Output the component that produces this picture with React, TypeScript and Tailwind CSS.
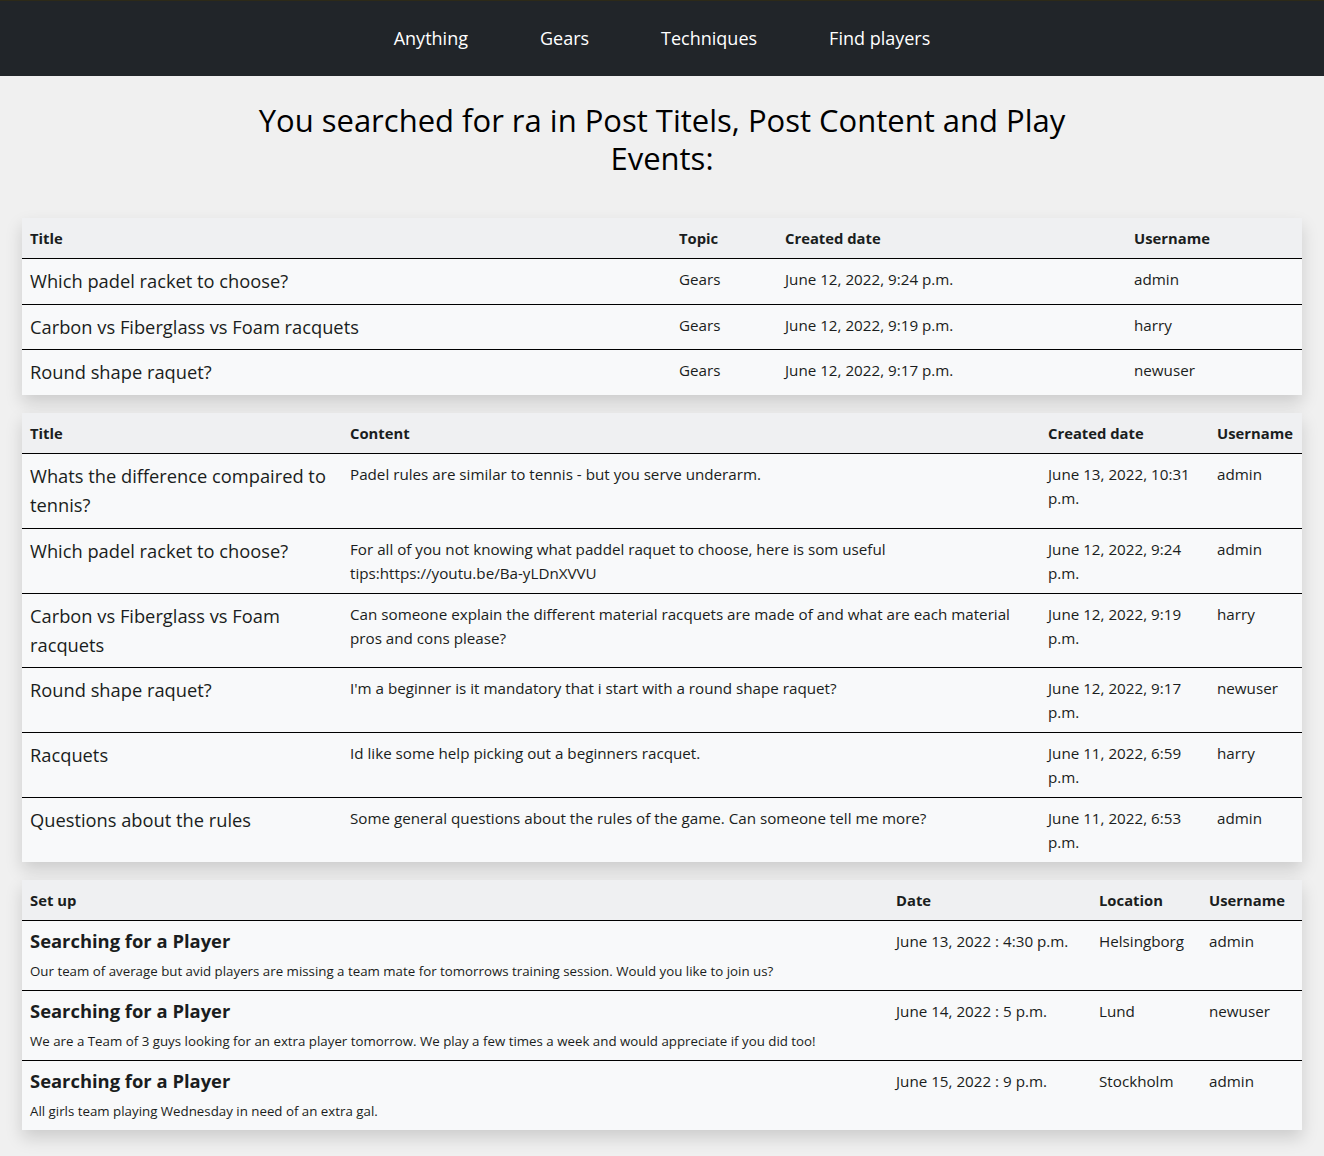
import React from "react";

const posts = [
  { title: "Which padel racket to choose?", topic: "Gears", date: "June 12, 2022, 9:24 p.m.", user: "admin" },
  { title: "Carbon vs Fiberglass vs Foam racquets", topic: "Gears", date: "June 12, 2022, 9:19 p.m.", user: "harry" },
  { title: "Round shape raquet?", topic: "Gears", date: "June 12, 2022, 9:17 p.m.", user: "newuser" },
];

const contents = [
  { title: "Whats the difference compaired to tennis?", content: "Padel rules are similar to tennis - but you serve underarm.", date: "June 13, 2022, 10:31 p.m.", user: "admin" },
  { title: "Which padel racket to choose?", content: "For all of you not knowing what paddel raquet to choose, here is som useful tips:https://youtu.be/Ba-yLDnXVVU", date: "June 12, 2022, 9:24 p.m.", user: "admin" },
  { title: "Carbon vs Fiberglass vs Foam racquets", content: "Can someone explain the different material racquets are made of and what are each material pros and cons please?", date: "June 12, 2022, 9:19 p.m.", user: "harry" },
  { title: "Round shape raquet?", content: "I'm a beginner is it mandatory that i start with a round shape raquet?", date: "June 12, 2022, 9:17 p.m.", user: "newuser" },
  { title: "Racquets", content: "Id like some help picking out a beginners racquet.", date: "June 11, 2022, 6:59 p.m.", user: "harry" },
  { title: "Questions about the rules", content: "Some general questions about the rules of the game. Can someone tell me more?", date: "June 11, 2022, 6:53 p.m.", user: "admin" },
];

const events = [
  { title: "Searching for a Player", text: "Our team of average but avid players are missing a team mate for tomorrows training session. Would you like to join us?", date: "June 13, 2022 : 4:30 p.m.", location: "Helsingborg", user: "admin" },
  { title: "Searching for a Player", text: "We are a Team of 3 guys looking for an extra player tomorrow. We play a few times a week and would appreciate if you did too!", date: "June 14, 2022 : 5 p.m.", location: "Lund", user: "newuser" },
  { title: "Searching for a Player", text: "All girls team playing Wednesday in need of an extra gal.", date: "June 15, 2022 : 9 p.m.", location: "Stockholm", user: "admin" },
];

const th = "px-2 py-2 text-left font-bold text-[14.8px] leading-6 align-top";
const td = "px-2 py-2 text-[15.2px] leading-6 align-top";
const titleTd = "px-2 py-2 text-[18.3px] leading-[28.8px] align-top";

export default function App() {
  return (
    <div className="min-h-screen bg-[#f0f0f0] text-[#1a1d20] font-['Open_Sans',sans-serif] pb-6">
      {/* navbar */}
      <nav className="h-[76px] bg-[#212529] border-t border-[#2d2a18] flex items-center justify-center">
        <ul className="flex items-center">
          {["Anything", "Gears", "Techniques", "Find players"].map((l) => (
            <li key={l}>
              <a href="#" className="block px-9 text-[18px] text-white">{l}</a>
            </li>
          ))}
        </ul>
      </nav>

      <h2 className="mx-auto mt-[25px] max-w-[840px] text-center text-[31px] font-medium leading-[38.4px] text-black">
        You searched for ra in Post Titels, Post Content and Play Events:
      </h2>

      <div className="mt-[40px] px-[22px] flex flex-col gap-[18px]">
        {/* posts by title */}
        <div className="shadow-[0_8px_16px_rgba(0,0,0,0.15)]">
          <table className="w-full table-fixed border-collapse">
            <colgroup>
              <col className="w-[649px]" />
              <col className="w-[106px]" />
              <col className="w-[349px]" />
              <col />
            </colgroup>
            <thead className="bg-[#eff0f2]">
              <tr className="border-b border-black">
                <th className={th}>Title</th>
                <th className={th}>Topic</th>
                <th className={th}>Created date</th>
                <th className={th}>Username</th>
              </tr>
            </thead>
            <tbody className="bg-[#f8f9fa]">
              {posts.map((p, i) => (
                <tr key={i} className={i < posts.length - 1 ? "border-b border-black" : ""}>
                  <td className={titleTd}>{p.title}</td>
                  <td className={td}>{p.topic}</td>
                  <td className={td}>{p.date}</td>
                  <td className={td}>{p.user}</td>
                </tr>
              ))}
            </tbody>
          </table>
        </div>

        {/* posts by content */}
        <div className="shadow-[0_8px_16px_rgba(0,0,0,0.15)]">
          <table className="w-full table-fixed border-collapse">
            <colgroup>
              <col className="w-[320px]" />
              <col className="w-[698px]" />
              <col className="w-[169px]" />
              <col />
            </colgroup>
            <thead className="bg-[#eff0f2]">
              <tr className="border-b border-black">
                <th className={th}>Title</th>
                <th className={th}>Content</th>
                <th className={th}>Created date</th>
                <th className={th}>Username</th>
              </tr>
            </thead>
            <tbody className="bg-[#f8f9fa]">
              {contents.map((p, i) => (
                <tr key={i} className={i < contents.length - 1 ? "border-b border-black" : ""}>
                  <td className={titleTd}>{p.title}</td>
                  <td className={td}>{p.content}</td>
                  <td className={td}>{p.date}</td>
                  <td className={td}>{p.user}</td>
                </tr>
              ))}
            </tbody>
          </table>
        </div>

        {/* play events */}
        <div className="shadow-[0_8px_16px_rgba(0,0,0,0.15)]">
          <table className="w-full table-fixed border-collapse">
            <colgroup>
              <col className="w-[866px]" />
              <col className="w-[203px]" />
              <col className="w-[110px]" />
              <col />
            </colgroup>
            <thead className="bg-[#eff0f2]">
              <tr className="border-b border-black">
                <th className={th}>Set up</th>
                <th className={th}>Date</th>
                <th className={th}>Location</th>
                <th className={th}>Username</th>
              </tr>
            </thead>
            <tbody className="bg-[#f8f9fa]">
              {events.map((e, i) => (
                <tr key={i} className={i < events.length - 1 ? "border-b border-black" : ""}>
                  <td className="px-2 py-2 align-top">
                    <h5 className="mb-2 text-[18.4px] font-bold leading-6">{e.title}</h5>
                    <small className="block text-[13.3px] leading-[21px]">{e.text}</small>
                  </td>
                  <td className={td}>{e.date}</td>
                  <td className={td}>{e.location}</td>
                  <td className={td}>{e.user}</td>
                </tr>
              ))}
            </tbody>
          </table>
        </div>
      </div>
    </div>
  );
}
